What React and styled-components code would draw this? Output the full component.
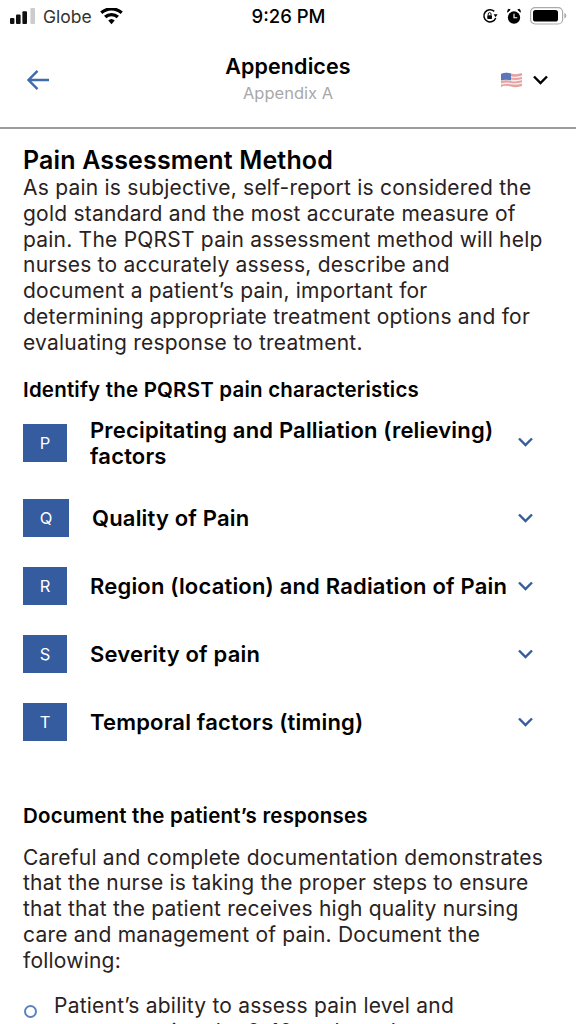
import React from "react";
import styled, { createGlobalStyle } from "styled-components";

const Global = createGlobalStyle`
  html, body {
    margin: 0;
    padding: 0;
    background: #fff;
    font-family: Inter, "Liberation Sans", sans-serif;
    color: #000;
  }
`;

const Page = styled.div`
  width: 576px;
  height: 1024px;
  overflow: hidden;
  background: #fff;
`;

const StatusBar = styled.div`
  height: 32px;
  padding: 0 9px 0 10px;
  display: grid;
  grid-template-columns: 1fr auto 1fr;
  align-items: center;
  font-size: 17.5px;
`;

const StatusLeft = styled.div`
  display: flex;
  align-items: center;
  gap: 8px;
  color: #333;
`;

const StatusRight = styled.div`
  display: flex;
  align-items: center;
  justify-content: flex-end;
  gap: 9px;
`;

const Clock = styled.div`
  font-size: 18.5px;
  font-weight: 500;
`;

const Header = styled.header`
  height: 95px;
  display: grid;
  grid-template-columns: 1fr auto 1fr;
  align-items: center;
  padding: 0 26px;
  border-bottom: 2px solid #9c9c9c;
`;

const Titles = styled.div`
  text-align: center;
`;

const HeaderTitle = styled.div`
  font-size: 21.5px;
  font-weight: 600;
  letter-spacing: 0.1px;
  line-height: 26px;
`;

const HeaderSub = styled.div`
  font-size: 16.5px;
  line-height: 28px;
  color: #a8a8a8;
`;

const Lang = styled.div`
  display: flex;
  justify-content: flex-end;
  align-items: center;
  gap: 11px;
  margin-right: 2px;
`;

const Content = styled.main`
  padding: 17px 23px 0;
`;

const Heading = styled.h1`
  margin: 0;
  font-size: 25px;
  line-height: 29px;
  letter-spacing: 0.15px;
  font-weight: 600;
`;

const Body = styled.p`
  margin: ${({ $top }) => $top || 0}px 0 0;
  font-size: 21px;
  line-height: 25.8px;
  letter-spacing: 0.22px;
  color: #2a2222;
`;

const SubHeading = styled.h2`
  margin: ${({ $top }) => $top}px 0 0;
  font-size: 20.5px;
  line-height: 24px;
  letter-spacing: 0.2px;
  font-weight: 600;
`;

const Rows = styled.div`
  margin-top: 15px;
  display: flex;
  flex-direction: column;
  gap: 30px;
`;

const Row = styled.div`
  display: flex;
  align-items: ${({ $top }) => ($top ? "flex-start" : "center")};
  min-height: 38px;
`;

const Badge = styled.div`
  width: ${({ $w }) => $w}px;
  height: 38px;
  flex: none;
  margin-top: ${({ $top }) => ($top ? 7 : 0)}px;
  background: #355c9f;
  color: #fff;
  font-size: 16.5px;
  display: flex;
  align-items: center;
  justify-content: center;
`;

const RowTitle = styled.div`
  flex: 1;
  margin-left: 23px;
  font-size: 22px;
  line-height: 26px;
  letter-spacing: 0.18px;
  font-weight: 600;
`;

const Chevron = styled.div`
  flex: none;
  width: 16px;
  margin: ${({ $top }) => ($top ? "20px" : "0")} 19px 0 0;
  display: flex;
`;

const Bullets = styled.ul`
  margin: 19px 0 0;
  padding: 0;
  list-style: none;
`;

const Bullet = styled.li`
  display: flex;
  gap: 17px;
  padding-right: 20px;
  font-size: 21px;
  line-height: 26px;
  letter-spacing: 0.22px;
  color: #2a2222;
`;

const Dot = styled.span`
  flex: none;
  width: 13px;
  height: 13px;
  margin: 12px 0 0 1px;
  box-sizing: border-box;
  border: 2px solid #5a82bf;
  border-radius: 50%;
`;

const rows = [
  { l: "P", t: "Precipitating and Palliation (relieving) factors", top: true, w: 44 },
  { l: "Q", t: "Quality of Pain", w: 46 },
  { l: "R", t: "Region (location) and Radiation of Pain", w: 44 },
  { l: "S", t: "Severity of pain", w: 44 },
  { l: "T", t: "Temporal factors (timing)", w: 44 },
];

const Signal = () => (
  <svg width="25" height="16" viewBox="0 0 25 16">
    <rect x="0" y="10" width="4.4" height="6" rx="1" fill="#111" />
    <rect x="6" y="6.5" width="4.6" height="9.5" rx="1" fill="#111" />
    <rect x="12.4" y="3.2" width="4.6" height="12.8" rx="1" fill="#111" />
    <rect x="20.4" y="0" width="4.6" height="16" rx="1" fill="#ccc" />
  </svg>
);

const Wifi = () => (
  <svg width="23" height="17" viewBox="0 0 24 17">
    <path d="M12 16.5 L8.6 12.6 a5 5 0 0 1 6.8 0 Z" fill="#000" />
    <path d="M6.6 10.4 L4.2 7.8 a11.6 11.6 0 0 1 15.6 0 L17.4 10.4 a8 8 0 0 0 -10.8 0 Z" fill="#000" />
    <path d="M2.4 5.8 L0.2 3.4 a17.6 17.6 0 0 1 23.6 0 L21.6 5.8 a14.4 14.4 0 0 0 -19.2 0 Z" fill="#000" />
  </svg>
);

const RotationLock = () => (
  <svg width="16" height="16" viewBox="0 0 17 17">
    <path d="M14.6 10.6 A6.5 6.5 0 1 1 13 3.6" fill="none" stroke="#000" strokeWidth="1.6" />
    <path d="M12.4 6.6 L16.6 6.6 L14.4 9.8 Z" fill="#000" />
    <rect x="5.6" y="7.6" width="5" height="4" rx="0.6" fill="#000" />
    <path d="M6.6 7.6 V6.4 a1.5 1.5 0 0 1 3 0 V7.6" fill="none" stroke="#000" strokeWidth="1" />
  </svg>
);

const Alarm = () => (
  <svg width="14" height="17" viewBox="0 0 15 17">
    <circle cx="7.5" cy="9.6" r="6.6" fill="#000" />
    <path d="M7.5 5.5 V9.9 H11" fill="none" stroke="#fff" strokeWidth="1.2" />
    <path d="M0.6 3.8 L3.4 1.2 L1.4 0.8 Z M14.4 3.8 L11.6 1.2 L13.6 0.8 Z" fill="#000" stroke="#000" />
  </svg>
);

const Battery = () => (
  <svg width="37" height="18" viewBox="0 0 37 18">
    <rect x="0.6" y="0.6" width="32" height="16.4" rx="4.5" fill="none" stroke="#aaa" strokeWidth="1.2" />
    <rect x="3" y="3" width="25" height="11.6" rx="2.6" fill="#000" />
    <path d="M34.4 6 a3 3 0 0 1 0 5.6 Z" fill="#aaa" />
  </svg>
);

const Back = () => (
  <svg width="24" height="22" viewBox="0 0 24 22">
    <path d="M2.5 11 H23 M11.5 1.8 L2.5 11 L11.5 20.2" fill="none" stroke="#3f6cad" strokeWidth="2.4" />
  </svg>
);

const Flag = () => (
  <svg width="21" height="16" viewBox="0 0 21 16">
    <path d="M0 2 Q5 0 10 1.5 T21 1 V14 Q16 16 10 14.5 T0 15 Z" fill="#e8a0a0" />
    <path d="M0 5 Q5 3.4 10 4.8 T21 4.2 M0 8.5 Q5 7 10 8.2 T21 7.6 M0 12 Q5 10.6 10 11.6 T21 11" fill="none" stroke="#f5eeee" strokeWidth="1.4" />
    <path d="M0 2 Q5 0 10 1.5 V8.4 Q5 7 0 8.5 Z" fill="#5a78b8" />
  </svg>
);

const ChevronIcon = ({ color = "#355c9f" }) => (
  <svg width="15" height="10" viewBox="0 0 15 10">
    <path d="M1 1.5 L7.5 8 L14 1.5" fill="none" stroke={color} strokeWidth="2.4" />
  </svg>
);

export default function App() {
  return (
    <Page>
      <Global />
      <StatusBar>
        <StatusLeft>
          <Signal />
          <span>Globe</span>
          <Wifi />
        </StatusLeft>
        <Clock>9:26 PM</Clock>
        <StatusRight>
          <RotationLock />
          <Alarm />
          <Battery />
        </StatusRight>
      </StatusBar>
      <Header>
        <Back />
        <Titles>
          <HeaderTitle>Appendices</HeaderTitle>
          <HeaderSub>Appendix A</HeaderSub>
        </Titles>
        <Lang>
          <Flag />
          <ChevronIcon color="#000" />
        </Lang>
      </Header>
      <Content>
        <Heading>Pain Assessment Method</Heading>
        <Body>
          As pain is subjective, self-report is considered the gold standard and the most accurate
          measure of pain. The PQRST pain assessment method will help nurses to accurately assess,
          describe and document a patient’s pain, important for determining appropriate treatment
          options and for evaluating response to treatment.
        </Body>
        <SubHeading $top={22}>Identify the PQRST pain characteristics</SubHeading>
        <Rows>
          {rows.map((r) => (
            <Row key={r.l} $top={r.top}>
              <Badge $w={r.w} $top={r.top}>{r.l}</Badge>
              <RowTitle>{r.t}</RowTitle>
              <Chevron $top={r.top}>
                <ChevronIcon />
              </Chevron>
            </Row>
          ))}
        </Rows>
        <SubHeading $top={63}>Document the patient’s responses</SubHeading>
        <Body $top={17}>
          Careful and complete documentation demonstrates that the nurse is taking the proper steps
          to ensure that that the patient receives high quality nursing care and management of pain.
          Document the following:
        </Body>
        <Bullets>
          <Bullet>
            <Dot />
            <span>Patient’s ability to assess pain level and measure using the 0-10 scale and</span>
          </Bullet>
        </Bullets>
      </Content>
    </Page>
  );
}
